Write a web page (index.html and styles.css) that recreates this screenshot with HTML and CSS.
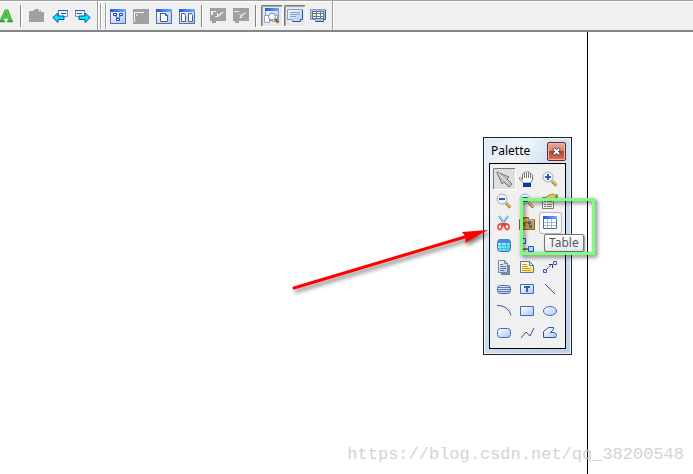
FILE: index.html
```html
<!DOCTYPE html>
<html lang="en">
<head>
<meta charset="utf-8">
<title>Diagram editor</title>
<link rel="stylesheet" href="styles.css">
</head>
<body>
<svg class="defs" width="0" height="0" aria-hidden="true">
  <defs>
    <linearGradient id="blue" x1="0" y1="0" x2="1" y2="1"><stop offset="0" stop-color="#fff"/><stop offset="1" stop-color="#a9c6fb"/></linearGradient>
    <linearGradient id="bar" x1="0" y1="0" x2="1" y2="0"><stop offset="0" stop-color="#245ad8"/><stop offset="1" stop-color="#78aaff"/></linearGradient>
    <linearGradient id="cyan" x1="0" y1="0" x2="1" y2="1"><stop offset="0" stop-color="#d5ffff"/><stop offset="1" stop-color="#22d6f2"/></linearGradient>
    <linearGradient id="gold" x1="0" y1="0" x2="1" y2="1"><stop offset="0" stop-color="#fff"/><stop offset="1" stop-color="#ffdf69"/></linearGradient>
    <g id="frame"><rect x=".5" y="1.5" width="15" height="14" fill="url(#blue)" stroke="#56729c"/><path d="M0 1h16v3H0z" fill="url(#bar)"/></g>
    <g id="lens"><path d="M10 10l4.500 4.500" stroke="#8d713c" stroke-width="3"/><path d="M10 9.500l4.500 4.500" stroke="#f3cb62" stroke-width="1.500"/><circle cx="6" cy="6" r="5" fill="#eef4ff" stroke="#a3abba"/></g>
  </defs>
</svg>

<div class="toolbar" role="toolbar">
  <div class="group first">
    <button class="tool" aria-label="Font"><svg viewBox="0 0 16 16"><path d="M2 13L7 2h3l4 11h-3l-1-3H6l-1 3zM7 8h2L8 5z" fill="#4fcf45" stroke="#2f9a35" stroke-width=".8"/><path d="M1 13.500h6M9 13.500h6" stroke="#2b9a33" stroke-width="1.500"/></svg></button>
    <i class="sep"></i>
    <button class="tool" aria-label="Module"><svg viewBox="0 0 16 16"><path d="M0 3h4l2-2h3l1 1v2l2-2v2h3v10H0z" fill="#a0a0a0"/></svg></button>
    <button class="tool" aria-label="Back"><svg viewBox="0 0 16 16"><path d="M6.500 2.500h9v6h-9z" fill="#eaf2ff" stroke="#7c91b8"/><path d="M6 2.500h10M9 5.500h5" stroke="#3157b4"/><path d="M.8 9.500L6 5v3h6v3.500H6v3z" fill="#00eaff" stroke="#0a4f9a"/></svg></button>
    <button class="tool" aria-label="Forward"><svg viewBox="0 0 16 16"><path d="M.5 2.500h9v6h-9z" fill="#eaf2ff" stroke="#7c91b8"/><path d="M0 2.500h10M2 5.500h5" stroke="#3157b4"/><path d="M15.200 9.500L10 5v3H4v3.500h6v3z" fill="#00eaff" stroke="#0a4f9a"/></svg></button>
  </div>
  <div class="group">
    <i class="grip"></i>
    <button class="tool" aria-label="Diagram"><svg viewBox="0 0 16 16"><use href="#frame"/><path d="M5 7l3 4M11 7l-3 4" stroke="#2045bd"/><path d="M3.500 5.500h3v2h-3zM9.500 5.500h3v2h-3zM6.500 10.500h3v2h-3z" fill="#fff" stroke="#2045bd"/></svg></button>
    <button class="tool" aria-label="Parent"><svg viewBox="0 0 16 16"><path d="M0 1h16v15H0z" fill="#a0a0a0"/><path d="M1.500 14V5M1 4.500h10M3 8l2-2" stroke="#f4f4f4" fill="none"/></svg></button>
    <button class="tool" aria-label="Page"><svg viewBox="0 0 16 16"><use href="#frame"/><path d="M4.500 5.500h5l2 2v6h-7zM9.500 5.500v2h2" fill="#fff" stroke="#445e7f"/></svg></button>
    <button class="tool" aria-label="Two pages"><svg viewBox="0 0 16 16"><use href="#frame"/><path d="M2.500 5.500h3l1 2v6h-4zM9.500 5.500h3l1 2v6h-4z" fill="#fff" stroke="#445e7f"/></svg></button>
    <i class="sep"></i>
    <button class="tool" aria-label="Import"><svg viewBox="0 0 16 16"><path d="M0 0h16v13H6v2H2v-2H0z" fill="#a0a0a0"/><path d="M1 3h5v1H3v3H1zM7 5h1v2l4-3h2l-6 5H5V8h2z" fill="#f2f2f2"/></svg></button>
    <button class="tool" aria-label="Export"><svg viewBox="0 0 16 16"><path d="M0 0h16v13H6v2H2v-2H0z" fill="#a0a0a0"/><path d="M1 3h5v1H1zM5 5l3 2 5-3v1l-4 3v2H6l2-2z" fill="#f2f2f2"/></svg></button>
    <i class="sep"></i>
    <button class="tool on" aria-label="Browser"><svg viewBox="0 0 16 16"><path d="M1.500.5h13v12h-13z" fill="url(#blue)" stroke="#7899d5"/><path d="M1 0h14v3H1z" fill="url(#bar)"/><path d="M.5 7.500h5v7h-5zM8.500 7.500h5v6h-5z" fill="#fff" stroke="#92a4bc"/><path d="M11 11l3.500 3.500" stroke="#a76413" stroke-width="3"/><circle cx="8" cy="8.500" r="3.500" fill="#eef8ff" stroke="#7890a8"/></svg></button>
    <button class="tool on" aria-label="Output"><svg viewBox="0 0 16 16"><path d="M.5 1.500h15v10h-2v2h-8v-2h-5z" fill="url(#blue)" stroke="#829fc8"/><path d="M15.500 2v9.500h-2v2h-8" stroke="#375981"/><path d="M3 4.500h10M3 6.500h10M3 8.500h6" stroke="#8ba0bf"/></svg></button>
    <button class="tool" aria-label="Results"><svg viewBox="0 0 16 16"><path d="M.5 1.500h15v10h-2v2h-8v-2h-5z" fill="#a9c2e7" stroke="#829fc8"/><path d="M15.500 2v9.500h-2v2h-8" stroke="#375981"/><path d="M2 3h12v8H2z" fill="#fff"/><path d="M3 6h3v2H3z" fill="#ffe894"/><path d="M2 3.500h12M2 5.500h12M2 8.500h12M2 10.500h12M2.500 3v8M6.500 3v8M10.500 3v8M13.500 3v8" stroke="#62728c"/></svg></button>
  </div>
</div>

<main class="canvas">
  <div class="sheet"></div>
  <p class="watermark">https://blog.csdn.net/qq_38200548</p>

  <section class="palette">
    <header class="title"><h1>Palette</h1><button class="close" aria-label="Close"><svg viewBox="0 0 9 9"><path d="M1.500 1.500l6 6M7.500 1.500l-6 6" stroke="#49506c" stroke-width="3.500"/><path d="M2 2l5 5M7 2L2 7" stroke="#fff" stroke-width="1.800"/></svg></button></header>
    <div class="tools">
      <button class="on" aria-label="Pointer"><svg viewBox="0 0 16 16"><path d="M.8 1L13 6l-2 2 5 5-3 3-5-5-2 2z" fill="#bdbdbd" stroke="#777"/><path d="M2 2l10 10" stroke="#ededed"/></svg></button>
      <button aria-label="Hand"><svg viewBox="0 0 16 16"><path d="M4.500 12L.5 8V7h1l2 1.500V3q1-1.500 2 0V1.500q1-1.500 2 0V1q1-1.500 2 0v1q1-1.500 2 0v2q1-1.500 2 0v5l-2 3z" fill="#fff" stroke="#777"/><path d="M5.500 3v4M7.500 2v5M9.500 2v5M11.500 3v4" stroke="#777"/><path d="M4 12h8v4H4z" fill="#0638b8"/></svg></button>
      <button aria-label="Zoom in"><svg viewBox="0 0 16 16"><use href="#lens"/><path d="M3 6h6M6 3v6" stroke="#315ba6" stroke-width="2"/></svg></button>
      <button aria-label="Zoom out"><svg viewBox="0 0 16 16"><use href="#lens"/><path d="M3 6h6" stroke="#315ba6" stroke-width="2"/></svg></button>
      <button aria-label="Zoom to area"><svg viewBox="0 0 16 16"><use href="#lens"/><path d="M3.500 4.500h5v4h-5z" fill="#91b8ff" stroke="#1755d5"/></svg></button>
      <button aria-label="Properties"><svg viewBox="0 0 16 16"><path d="M.5 4.500h11v11H.5z" fill="#f8f8ef" stroke="#84846e"/><path d="M2 8.500h2M5 8.500h5M2 11.500h2M5 11.500h5M2 13.500h2M5 13.500h5" stroke="#777c87"/><path d="M3 5l4-3 5-1 1 1h3v5h-3l-2 1-3-2-2 1z" fill="#eacb58" stroke="#9a873f"/><path d="M13 2h3v5h-3z" fill="#68a17c"/></svg></button>
      <button aria-label="Cut"><svg viewBox="0 0 16 16"><path d="M3 1l7 10M12 1L5 11" stroke="#368ed4" stroke-width="2"/><path d="M3 1l6 8M12 1L6 9" stroke="#d9f1ff" stroke-width=".8"/><path d="M7 9q-5-1-5 3 0 3 2 2.500 2-.5 3-5.500zM8 9q5-1 5 3 0 3-2 2.500-2-.5-3-5.500z" stroke="#f13a1c" stroke-width="1.500"/></svg></button>
      <button aria-label="Package"><svg viewBox="0 0 16 16"><path d="M.5 4.500h4v-2h5v2h6v10H.5z" fill="#cf9a3c" stroke="#8c6424"/><path d="M1 5h14" stroke="#f0cc88"/><path d="M4 9l4-2 4 4" stroke="#775524"/><path d="M3.500 8.500h2v2h-2zM9.500 6.500h2v2h-2zM10.500 10.500h2v2h-2z" fill="#9ca8ff" stroke="#3448a4"/></svg></button>
      <button class="hover" aria-label="Table"><svg viewBox="0 0 16 16"><path d="M1.500 1.500h13v12h-13z" fill="#fff" stroke="#516d9f"/><path d="M1 1h14v3H1z" fill="url(#bar)"/><path d="M2 7.500h12M2 10.500h12M5.500 4v9M9.500 4v9" stroke="#a5b9d9"/></svg></button>
      <button aria-label="View"><svg viewBox="0 0 16 16"><rect x="1.500" y="2.500" width="13" height="12" rx="3" fill="url(#cyan)" stroke="#3971ad"/><path d="M3 2h10l2 4H1z" fill="#4b86e0"/><path d="M2 8.500h12M2 11.500h12M5.500 6v8M10.500 6v8" stroke="#43bde0"/></svg></button>
      <button aria-label="Reference"><svg viewBox="0 0 16 16"><path d="M3.500 7v5H9" stroke="#111"/><path d="M1.500 1.500h5v5h-5zM9.500 9.500h5v5h-5z" fill="url(#blue)" stroke="#2758bd"/></svg></button>
      <button aria-label="Procedure"><svg viewBox="0 0 16 16"></svg></button>
      <button aria-label="File"><svg viewBox="0 0 16 16"><path d="M5 15h8V6" stroke="#758899" stroke-width="2"/><path d="M2.500 1.500h6l3 3v9h-9zM8.500 1.500v3h3" fill="url(#blue)" stroke="#6e85a5"/><path d="M4 5.500h3M4 7.500h6M4 9.500h6M4 11.500h4" stroke="#637590"/></svg></button>
      <button aria-label="Note"><svg viewBox="0 0 16 16"><path d="M1.500 2.500h9l4 4v7h-13zM10.500 2.500v4h4" fill="url(#gold)" stroke="#5878ad"/><path d="M3 5.500h5M3 7.500h6M3 9.500h9M3 11.500h9" stroke="#d39e13"/></svg></button>
      <button aria-label="Link"><svg viewBox="0 0 16 16"><path d="M5 10l5-5" stroke="#213577" stroke-dasharray="2 1"/><path d="M7 5.500h3.500V9" stroke="#213577"/><path d="M1.500 10.500h3v3h-3zM11.500 2.500h3v3h-3z" fill="#eaf1ff" stroke="#3457ce"/></svg></button>
      <button aria-label="Title"><svg viewBox="0 0 16 16"><rect x="1.500" y="4.500" width="13" height="8" rx="3" fill="url(#blue)" stroke="#4464a8"/><path d="M2 6.500h12M2 8.500h12M2 10.500h12" stroke="#5e79b5"/></svg></button>
      <button aria-label="Text"><svg viewBox="0 0 16 16"><path d="M1.500 3.500h13v9h-13z" fill="url(#blue)" stroke="#4369b7"/><path d="M5 6h6M8 6v5" stroke="#3b5e9e" stroke-width="2"/></svg></button>
      <button aria-label="Line"><svg viewBox="0 0 16 16"><path d="M3 3l10 10" stroke="#355297"/></svg></button>
      <button aria-label="Arc"><svg viewBox="0 0 16 16"><path d="M1 2.500c7 0 12 3 14 10" stroke="#355297"/></svg></button>
      <button aria-label="Rectangle"><svg viewBox="0 0 16 16"><path d="M1.500 3.500h13v9h-13z" fill="url(#blue)" stroke="#4369b7"/></svg></button>
      <button aria-label="Ellipse"><svg viewBox="0 0 16 16"><ellipse cx="8" cy="8" rx="6.500" ry="4.500" fill="url(#blue)" stroke="#4369b7"/></svg></button>
      <button aria-label="Rounded rectangle"><svg viewBox="0 0 16 16"><rect x="1.500" y="3.500" width="13" height="9" rx="3" fill="url(#blue)" stroke="#4369b7"/></svg></button>
      <button aria-label="Polyline"><svg viewBox="0 0 16 16"><path d="M2 13l5-6 4 4 4-8" stroke="#355297"/></svg></button>
      <button aria-label="Polygon"><svg viewBox="0 0 16 16"><path d="M1.500 12.500v-6l5-4h5v2l-3 3h3c2 0 3 2 3 3l-1 2z" fill="url(#blue)" stroke="#355297"/></svg></button>
    </div>
  </section>

  <div class="tooltip" role="tooltip">Table</div>
  <div class="highlight"></div>
  <svg class="arrow" viewBox="0 0 208 76" aria-hidden="true"><path d="M6 63L180 11" stroke="red" stroke-width="3" stroke-linecap="round"/><path d="M200 5L174 7l4 5-1 6z" fill="red"/></svg>
</main>
</body>
</html>
```
FILE: styles.css
```css
* { box-sizing: border-box; }

body {
  margin: 0;
  min-height: 100vh;
  display: flex;
  flex-direction: column;
  overflow: hidden;
  background: #fff;
  color: #000;
  font: 12px/16px "Noto Sans", sans-serif;
}

button {
  display: flex;
  align-items: center;
  flex: none;
  margin: 0;
  padding: 0;
  border: 1px solid transparent;
  background: transparent;
}

svg { display: block; flex: none; fill: none; }
.defs { position: absolute; }
.tool svg, .tools svg { width: 16px; height: 16px; }

.toolbar {
  display: flex;
  height: 32px;
  border-top: 1px solid #a0a0a0;
  border-bottom: 2px solid #858585;
  background: #f0f0f0;
  box-shadow: inset 0 1px #fff;
  overflow: hidden;
}

.group {
  display: flex;
  align-items: center;
  padding-right: 3px;
  border-right: 1px solid #a0a0a0;
  box-shadow: 1px 0 #fff;
}

.first { margin-left: -6px; }
.tool { width: 23px; height: 22px; padding-left: 3px; }
.tool.on {
  width: 22px;
  margin-left: 1px;
  padding-left: 2px;
  border: 1px solid #777;
  border-right-color: #fff;
  border-bottom-color: #fff;
  border-radius: 2px;
  background: #e9e9e9;
  box-shadow: inset 1px 1px #aaa;
}

.sep { width: 2px; height: 22px; margin: 0 3px; border-left: 1px solid #858585; border-right: 1px solid #fff; }
.grip { width: 6px; height: 26px; margin: 0 0 0 2px; border: solid #a0a0a0; border-width: 0 1px; box-shadow: inset 1px 0 #fff, 1px 0 #fff; }

.canvas { position: relative; flex: 1; display: flex; }
.sheet { flex: 1; margin-right: 105px; border-right: 1px solid #000; }

.watermark {
  position: absolute;
  right: 9px;
  bottom: 9px;
  margin: 0;
  color: #d4d4d0;
  font: 17px/20px "Liberation Mono", monospace;
}

.palette {
  position: absolute;
  left: 483px;
  top: 105px;
  padding: 4px 5px 5px;
  border: 1px solid #222;
  background: linear-gradient(120deg, #dce9f5, #f1f6fb 20%, #d4e4f3 35%, #b9d1ea);
  box-shadow: inset 0 0 0 1px #edf6ff;
}

.title { display: flex; align-items: center; height: 21px; padding: 0 0 3px 2px; }
h1 { flex: 1; margin: 0; font: 12px/16px "Noto Sans", sans-serif; }
.close {
  justify-content: center;
  width: 19px;
  height: 19px;
  border-color: #672620;
  border-radius: 2px;
  background: linear-gradient(#edac9c, #d98270 45%, #b83f22 50%, #d97853);
  box-shadow: inset 0 0 0 1px #f0b8a8;
}
.close svg { width: 9px; height: 9px; }

.tools {
  display: grid;
  grid-template-columns: repeat(3, 23px);
  grid-auto-rows: 22px;
  padding: 4px 3px;
  border: 1px solid #000;
  background: #f0f0f0;
}
.tools button { padding-left: 2px; }
.tools .on { border-color: #777 #fff #fff #777; border-radius: 2px; background: #dedede; }
.tools .hover { border-color: #b4b4b4; border-radius: 3px; background: #f8f8f8; }

.tooltip {
  position: absolute;
  left: 544px;
  top: 202px;
  padding: 0 4px;
  border: 1px solid #767676;
  border-radius: 2px;
  background: linear-gradient(#fff, #e6e7f1);
  color: #575757;
  box-shadow: 1px 1px 2px #888;
}

.highlight {
  position: absolute;
  left: 520px;
  top: 166px;
  width: 75px;
  height: 57px;
  border: 3px solid #7cff7c;
  filter: drop-shadow(2px 2px 2px #0009);
}

.arrow {
  position: absolute;
  left: 288px;
  top: 193px;
  width: 208px;
  height: 76px;
  filter: drop-shadow(2px 3px 2px #0008);
}
```
